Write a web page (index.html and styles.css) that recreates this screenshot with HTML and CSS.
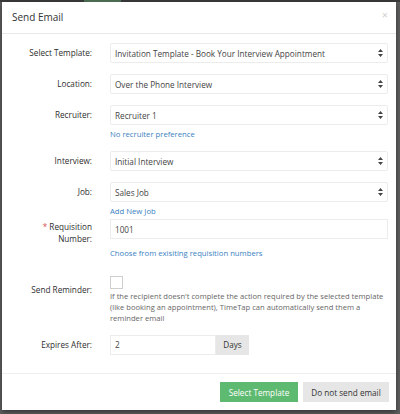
FILE: index.html
```html
<!DOCTYPE html>
<html>
<head>
<meta charset="utf-8">
<link rel="stylesheet" href="styles.css">
</head>
<body>
<div class="topbar"><span class="seg seg-a"></span><span class="seg seg-b"></span><span class="seg seg-c"></span></div>
<div class="modal">
  <div class="modal-header">
    <span class="title">Send Email</span>
    <span class="close">×</span>
  </div>
  <div class="modal-body">
    <div class="row">
      <div class="label">Select Template:</div>
      <div class="control">
        <div class="select"><span>Invitation Template - Book Your Interview Appointment</span>
          <svg class="arrows" width="5" height="8" viewBox="0 0 5 8"><path d="M2.5 0 L5 3 L0 3 Z M0 5 L5 5 L2.5 8 Z" fill="#444"/></svg></div>
      </div>
    </div>
    <div class="row">
      <div class="label">Location:</div>
      <div class="control">
        <div class="select"><span>Over the Phone Interview</span>
          <svg class="arrows" width="5" height="8" viewBox="0 0 5 8"><path d="M2.5 0 L5 3 L0 3 Z M0 5 L5 5 L2.5 8 Z" fill="#444"/></svg></div>
      </div>
    </div>
    <div class="row">
      <div class="label">Recruiter:</div>
      <div class="control">
        <div class="select"><span>Recruiter 1</span>
          <svg class="arrows" width="5" height="8" viewBox="0 0 5 8"><path d="M2.5 0 L5 3 L0 3 Z M0 5 L5 5 L2.5 8 Z" fill="#444"/></svg></div>
        <a class="link">No recruiter preference</a>
      </div>
    </div>
    <div class="row">
      <div class="label">Interview:</div>
      <div class="control">
        <div class="select"><span>Initial Interview</span>
          <svg class="arrows" width="5" height="8" viewBox="0 0 5 8"><path d="M2.5 0 L5 3 L0 3 Z M0 5 L5 5 L2.5 8 Z" fill="#444"/></svg></div>
      </div>
    </div>
    <div class="row row-tight">
      <div class="label">Job:</div>
      <div class="control">
        <div class="select"><span>Sales Job</span>
          <svg class="arrows" width="5" height="8" viewBox="0 0 5 8"><path d="M2.5 0 L5 3 L0 3 Z M0 5 L5 5 L2.5 8 Z" fill="#444"/></svg></div>
        <a class="link">Add New Job</a>
      </div>
    </div>
    <div class="row row-req">
      <div class="label label-two"><span class="req">*</span> Requisition<br>Number:</div>
      <div class="control">
        <div class="input">1001</div>
        <a class="link link-far">Choose from exisiting requisition numbers</a>
      </div>
    </div>
    <div class="row row-reminder">
      <div class="label label-check">Send Reminder:</div>
      <div class="control">
        <div class="checkbox"></div>
        <p class="help">If the recipient doesn't complete the action required by the selected template (like booking an appointment), TimeTap can automatically send them a reminder email</p>
      </div>
    </div>
    <div class="row row-last">
      <div class="label">Expires After:</div>
      <div class="control">
        <div class="group"><div class="input input-short">2</div><div class="addon">Days</div></div>
      </div>
    </div>
  </div>
  <div class="modal-footer">
    <button class="btn btn-green">Select Template</button>
    <button class="btn btn-gray">Do not send email</button>
  </div>
</div>
</body>
</html>
```
FILE: styles.css
```css
* { box-sizing: border-box; }
html, body {
  margin: 0;
  padding: 0;
}
body {
  background: #5e5e5e;
  font-family: "Open Sans", "Noto Sans", sans-serif;
  font-size: 8.2px;
  color: #333;
  width: 400px;
  height: 414px;
  overflow: hidden;
}
.topbar {
  height: 2px;
  background: #3a3a3a;
  display: flex;
}
.seg { display: block; height: 2px; }
.seg-a { width: 84px; margin-left: 0; }
.seg-b { width: 37px; background: #4a6a52; }
.seg-c { width: 20px; }
.modal {
  margin: 0 4px 0 2px;
  width: 394px;
  height: 408px;
  background: #fff;
  box-shadow: 0 2px 5px rgba(0,0,0,0.45);
  display: flex;
  flex-direction: column;
}
.modal-header {
  height: 32px;
  border-bottom: 1px solid #e8e8e8;
  display: flex;
  align-items: center;
  justify-content: space-between;
  padding: 0 8px 0 10px;
  flex: none;
}
.title {
  font-size: 10px;
  color: #333;
  margin-top: -1px;
}
.close {
  font-size: 11px;
  color: #cfcfcf;
  align-self: flex-start;
  margin-top: 5px;
}
.modal-body {
  padding-top: 9px;
  flex: 1;
}
.row {
  display: flex;
  margin-bottom: 11px;
}
.label {
  width: 90px;
  text-align: right;
  padding-top: 4px;
  line-height: 11px;
  flex: none;
  color: #2e2e2e;
}
.label-two {
  padding-top: 2px;
  line-height: 12px;
}
.req { color: #d9534f; }
.control {
  margin-left: 18px;
  width: 278px;
  display: flex;
  flex-direction: column;
  align-items: flex-start;
}
.select, .input {
  width: 278px;
  height: 20px;
  border: 1px solid #ececec;
  border-radius: 2px;
  display: flex;
  align-items: center;
  justify-content: space-between;
  padding: 0 4px 0 4px;
  color: #444;
  flex: none;
}
.input { border-radius: 0; padding-left: 4px; }
.arrows { flex: none; margin-right: 0; }
.link {
  color: #3a7fc1;
  margin-top: 3px;
  line-height: 12px;
  font-size: 7.7px;
}
.row-tight { margin-bottom: 2px; }
.link-far { margin-top: 8px; }
.row-req { margin-bottom: 17px; }
.label-check { padding-top: 8px; }
.checkbox {
  width: 13px;
  height: 13px;
  border: 1px solid #cfcfcf;
  flex: none;
}
.help {
  margin: 2px 0 0;
  width: 277px;
  color: #666;
  line-height: 11.2px;
  font-size: 7.6px;
}
.row-reminder { margin-bottom: 10px; }
.group { display: flex; }
.input-short { width: 106px; }
.addon {
  width: 33px;
  height: 20px;
  background: #e6e6e6;
  display: flex;
  align-items: center;
  justify-content: center;
  color: #333;
}
.modal-footer {
  border-top: 1px solid #eee;
  height: 37px;
  display: flex;
  justify-content: flex-end;
  align-items: flex-start;
  padding: 8px 7px 0 0;
  gap: 5px;
  flex: none;
}
.btn {
  font-family: "Open Sans", "Noto Sans", sans-serif;
  font-size: 8.2px;
  height: 20px;
  border: none;
  border-radius: 0;
  padding: 0;
}
.btn-green {
  background: #5eba70;
  color: #fff;
  width: 78px;
}
.btn-gray {
  background: #e6e6e6;
  color: #333;
  width: 86px;
}
```
